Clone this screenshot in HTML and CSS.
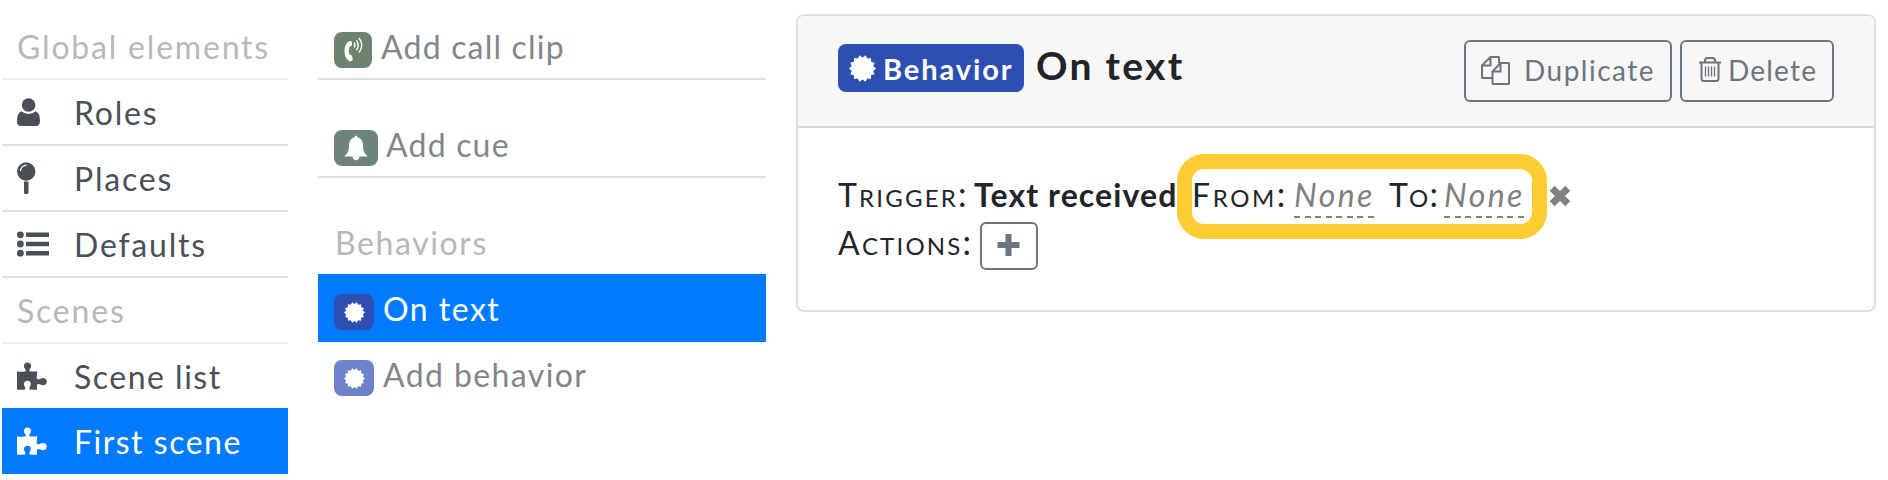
FILE: index.html
```html
<!DOCTYPE html>
<html lang="en">
<head>
<meta charset="utf-8">
<title>Scene editor</title>
<link rel="stylesheet" href="styles.css">
</head>
<body>
<svg class="defs" width="0" height="0">
  <symbol id="puzzle" viewBox="0 0 30 28"><path d="M0 9.500Q3 9.800 8 9.400C9.500 9.400 8.700 7.500 7.700 6.300C5.800 3.700 7.500 0.400 10.500 0.400S15.200 3.700 13.300 6.300C12.300 7.500 11.700 9.400 13.500 9.400Q17.500 9.800 20.300 9.200Q20 12 19.700 15.500C19.700 18 22 17.500 23.300 16.700C26 15 29.800 16 29.800 19.600S26.200 24.200 23.500 22.600C22 21.500 20 21.500 19.900 23.700Q19.800 26.500 20.300 27.400Q17 28 13 27.600C11.900 27.500 12.200 25.500 13.200 24C14.600 21.500 13.500 18.700 10.500 18.700S6.200 21.500 7.500 24C8.500 25.500 8.800 27.500 7.700 27.600Q3.500 28 0 27.600Z"/></symbol>
  <symbol id="burst" viewBox="-12 -12 24 24"><path d="M0-9.800L2.670-11.700 4.250-8.830 7.480-9.380 7.660-6.110 10.810-5.210 9.550-2.180 12 0 9.550 2.180 10.810 5.210 7.660 6.110 7.480 9.380 4.250 8.830 2.670 11.700 0 9.800-2.670 11.700-4.250 8.830-7.480 9.380-7.660 6.110-10.810 5.210-9.550 2.180-12 0-9.550-2.180-10.810-5.210-7.660-6.110-7.480-9.380-4.250-8.830-2.670-11.700Z"/></symbol>
</svg>
<div class="page">
  <nav class="nav">
    <div class="row heading"><span class="t">Global elements</span></div>
    <a class="row item"><span class="icon"><svg width="24" height="29" viewBox="0 0 24 29"><circle cx="11.600" cy="7" r="6.800"/><path d="M4.500 13.200Q11.500 19 18.500 13.200Q23 15 23 23Q23 28 19 28H4Q0 28 0 23Q0 15 4.500 13.200Z"/></svg></span><span class="t">Roles</span></a>
    <a class="row item"><span class="icon"><svg width="20" height="34" viewBox="0 0 20 34"><circle cx="9.200" cy="10.500" r="9.200"/><path d="M7 20.500H11.500V31.500Q11.500 33 10.200 33H8.300Q7 33 7 31.500Z"/><path d="M3.500 10A6 6 0 0 1 9.500 4.200" fill="none" stroke="#fff" stroke-width="1.200"/></svg></span><span class="t">Places</span></a>
    <a class="row item"><span class="icon"><svg width="32" height="28" viewBox="0 0 32 28"><circle cx="3.400" cy="4.800" r="3.400"/><circle cx="3.400" cy="14" r="3.400"/><circle cx="3.400" cy="23.200" r="3.400"/><path d="M9 2.500H32V7H9ZM9 11.800H32V16.300H9ZM9 21H32V25.500H9Z"/></svg></span><span class="t">Defaults</span></a>
    <div class="row heading"><span class="t">Scenes</span></div>
    <a class="row item plain"><span class="icon"><svg width="30" height="28"><use href="#puzzle"/></svg></span><span class="t">Scene list</span></a>
    <a class="row item plain active"><span class="icon"><svg width="30" height="28"><use href="#puzzle"/></svg></span><span class="t">First scene</span></a>
  </nav>

  <div class="list">
    <a class="row add"><span class="badge call"><svg width="20" height="26" viewBox="0 0 20 26"><path d="M5.500 4.500L8.500 4Q9.500 6.500 8.500 9L6.500 9.800Q5.200 13.500 6.500 17.500L8.500 18.300Q10 20.500 9.500 23.500L7 24.500Q1.500 21.500 1.500 14.500T5.500 4.500Z"/><path d="M11 5.800Q13 8 11 10.500M13.300 3.400Q17 8 13.300 13.200M16 1Q21.500 8 16 15.500" fill="none" stroke="#fff" stroke-width="1.400"/></svg></span><span class="t">Add call clip</span></a>
    <a class="row add spaced"><span class="badge cue"><svg width="24" height="26" viewBox="0 0 24 26"><path d="M12 .5Q13.300 .5 13.400 2.200C18 3.200 19 7 19 11C19 16 20.500 18.500 23.200 20.500V21.500H.8V20.500C3.500 18.500 5 16 5 11C5 7 6 3.200 10.600 2.200Q10.700 .5 12 .5ZM8.500 21.500H15.500Q15 25.300 12 25.300T8.500 21.500Z"/></svg></span><span class="t">Add cue</span></a>
    <div class="row heading spaced last"><span class="t">Behaviors</span></div>
    <a class="row behavior active"><span class="badge blue"><svg width="21" height="21"><use href="#burst"/></svg></span><span class="t">On text</span></a>
    <a class="row add last"><span class="badge blue faded"><svg width="21" height="21"><use href="#burst"/></svg></span><span class="t">Add behavior</span></a>
  </div>

  <section class="card">
    <header class="card-head">
      <span class="title-badge"><svg width="27" height="27"><use href="#burst"/></svg><span class="t">Behavior</span></span>
      <h1 class="title"><span class="t">On text</span></h1>
      <button class="btn duplicate"><svg width="29" height="29" viewBox="0 0 29 29"><path d="M10.500 22H1.500Q1 22 1 21.500V9.500L9.500 1H17.500Q18 1 18 1.500V7M9.500 1V9.500H1M11.500 15.500L19.500 7H27.500Q28 7 28 7.500V27.500Q28 28 27.500 28H12Q11.500 28 11.500 27.500ZM19.500 7V15.500H11.500"/></svg><span class="t">Duplicate</span></button>
      <button class="btn delete"><svg width="22" height="25" viewBox="0 0 22 25"><path d="M0 5.500H22M6 5V3.500Q6 1 8.500 1H13.500Q16 1 16 3.500V5M2.500 6V21.500Q2.500 24 5 24H17Q19.500 24 19.500 21.500V6"/><path class="thin" d="M6.500 9.500V19.500M9.500 9.500V19.500M12.500 9.500V19.500M15.500 9.500V19.500"/></svg><span class="t">Delete</span></button>
    </header>
    <div class="card-body">
      <div class="line">
        <span class="label trigger"><span class="t">Trigger:</span></span>
        <b class="event"><span class="t">Text received</span></b>
        <span class="params">
          <span class="label from"><span class="t">From:</span></span>
          <i class="value"><span class="t">None</span></i>
          <span class="label to"><span class="t">To:</span></span>
          <i class="value"><span class="t">None</span></i>
        </span>
        <svg class="remove" width="22" height="22" viewBox="0 0 22 22"><path d="M3.200 3.200L18.800 18.800M18.800 3.200L3.200 18.800"/></svg>
      </div>
      <div class="line">
        <span class="label actions"><span class="t">Actions:</span></span>
        <button class="btn plus"><svg width="24" height="24" viewBox="0 0 24 24"><path d="M11.500 1V23M.5 12H22.500"/></svg></button>
      </div>
    </div>
  </section>
</div>
</body>
</html>
```
FILE: styles.css
```css
*, ::after { box-sizing: border-box; }
body { margin: 0; background: #fff; color: #212529; font: 32px/38px Lato, "Open Sans", sans-serif; overflow: hidden; }
.defs { position: absolute; }
svg { display: block; flex: none; fill: currentColor; }
.t { display: block; margin-top: 2px; white-space: nowrap; }
.page { display: grid; grid-template-columns: 286px 448px 1080px; column-gap: 30px; padding: 14px 0 0 2px; align-items: start; }
.row { display: flex; align-items: center; height: 66px; border-bottom: 2px solid #dfdfdf; letter-spacing: 1.5px; }
.heading { color: #b5b9be; border-color: #eee; padding-left: 15px; letter-spacing: 1.8px; }
.item { color: #495057; padding-left: 15px; letter-spacing: 1.8px; }
.icon { width: 57px; }
.plain { height: 64px; border: 0; letter-spacing: 1.5px; }
.active { background: #007bff; color: #fff; border: 0; }
.plain.active { height: 66px; }
.spaced { margin-top: 32px; }
.last { height: 64px; border: 0; }
.last.heading { padding-left: 17px; letter-spacing: 1.6px; }
.add { color: #80868b; padding-left: 16px; letter-spacing: 1.2px; }
.add.last { letter-spacing: 1.4px; }
.behavior { height: 68px; padding-left: 16px; }
.badge { display: flex; align-items: center; justify-content: center; width: 40px; height: 36px; margin: 8px 9px 0 0; border-radius: 8px; color: #fff; }
.call { width: 38px; background: #6d836d; }
.cue { width: 44px; margin-right: 8px; background: #6d837e; }
.blue { background: #2d4eb2; }
.faded { background: #6c83c9; }
.card { height: 298px; border: 2px solid #dfdfdf; border-radius: 8px; }
.card-head { display: flex; align-items: flex-start; height: 112px; padding: 24px 40px; background: #f7f7f7; border-bottom: 2px solid #d8d8d8; border-radius: 6px 6px 0 0; }
.title-badge { display: flex; align-items: center; gap: 7px; width: 186px; height: 48px; margin-top: 4px; padding-left: 11px; border-radius: 8px; background: #2d4eb2; color: #fff; font-size: 29px; font-weight: 700; letter-spacing: 1.9px; }
.title { margin: -1px auto 0 12px; font-size: 39px; line-height: 48px; font-weight: 700; letter-spacing: 2.3px; }
.btn { display: flex; align-items: center; height: 62px; padding: 0; border: 2px solid #6c757d; border-radius: 6px; background: none; color: #6c757d; font: 28px/34px Lato, sans-serif; }
.btn .t { margin-top: -2px; }
.btn svg { fill: none; stroke: currentColor; stroke-width: 2; }
.btn .thin { stroke-width: 1.3; }
.duplicate { width: 208px; margin-right: 8px; padding-left: 15px; gap: 14px; letter-spacing: 1.5px; }
.duplicate svg { margin-top: -2px; }
.delete { width: 154px; padding-left: 17px; gap: 7px; letter-spacing: 1.2px; }
.delete svg { margin-top: -3px; }
.card-body { padding: 42px 40px; }
.line { display: flex; align-items: center; height: 48px; }
.label, .event { flex: none; }
.label { font-size: 34px; font-variant: small-caps; letter-spacing: 2.2px; }
.label .t { margin-top: 0; }
.label .t::first-letter { font-size: 32px; }
.trigger { width: 136px; }
.event { width: 218px; letter-spacing: 1.1px; }
.params { position: relative; display: flex; align-items: center; flex: none; height: 48px; }
.params::after { content: ""; position: absolute; left: -15.5px; top: -16px; width: 370.5px; height: 84.5px; border: 15px solid #ffcc33; border-radius: 27px; }
.from { width: 102px; letter-spacing: 2.6px; }
.to { width: 55px; letter-spacing: 1.2px; }
.value { width: 80px; height: 48px; margin-right: 15px; padding-top: 5px; color: #808080; letter-spacing: 2.4px; background: repeating-linear-gradient(90deg, #808080 0 6px, transparent 6px 10.57px) bottom / 100% 2px no-repeat; }
.value .t { margin-top: 1px; }
.to + .value { margin-right: 0; }
.remove { margin: 4px 0 0 25px; stroke: #808080; stroke-width: 7; }
.actions { width: 142px; }
.plus { width: 58px; height: 48px; margin-top: 8px; justify-content: center; }
.plus svg { margin-top: -2px; stroke-width: 6; }
```
